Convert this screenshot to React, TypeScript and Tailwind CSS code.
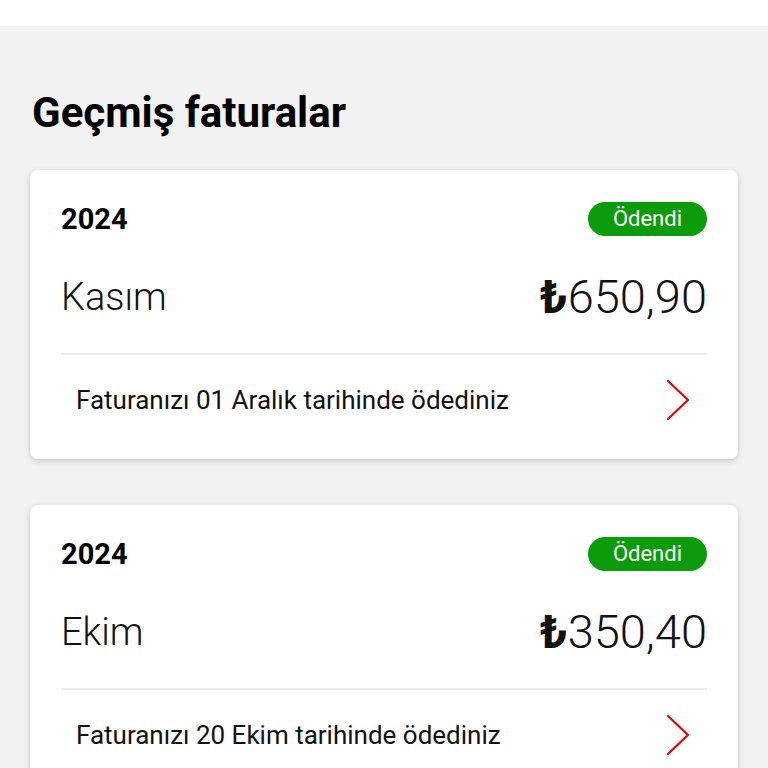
import React from "react";

const bills = [
  { year: "2024", month: "Kasım", amount: "650,90", note: "Faturanızı 01 Aralık tarihinde ödediniz" },
  { year: "2024", month: "Ekim", amount: "350,40", note: "Faturanızı 20 Ekim tarihinde ödediniz" },
];

function Chevron() {
  return (
    <svg width="26" height="44" viewBox="0 0 26 44" fill="none">
      <path d="M4 3 L24 22 L4 41" stroke="#e60000" strokeWidth="2.2" strokeLinecap="round" strokeLinejoin="round" />
    </svg>
  );
}

function BillCard({ year, month, amount, note }: (typeof bills)[number]) {
  return (
    <div className="rounded-lg bg-white px-[31px] shadow-[0_2px_6px_rgba(0,0,0,0.18)]">
      <div className="flex items-center justify-between pt-[32px]">
        <span className="text-[29px] font-bold leading-none text-black">{year}</span>
        <span className="rounded-full bg-[#0a9c0a] px-[25px] py-[3px] text-[22px] leading-[28px] text-white">
          Ödendi
        </span>
      </div>
      <div className="flex items-center justify-between pb-[33px] pt-[37px]">
        <span className="text-[38px] font-light leading-none text-[#111]">{month}</span>
        <span className="text-[47px] font-light leading-none text-[#111]">
          <span className="font-bold">₺</span>
          {amount}
        </span>
      </div>
      <div className="h-[2px] bg-[#ebebeb]" />
      <div className="flex items-center justify-between pb-[37px] pl-[15px] pr-[17px] pt-[23px]">
        <span className="text-[26px] leading-none text-[#111]">{note}</span>
        <Chevron />
      </div>
    </div>
  );
}

export default function App() {
  return (
    <div className="min-h-[768px] w-full bg-[#f2f2f2] font-['Roboto',sans-serif]">
      <div className="h-[26px] bg-white" />
      <div className="flex flex-col px-[30px]">
        <h1 className="pb-[37px] pl-[2px] pt-[67px] text-[42px] font-bold leading-[40px] text-black">
          Geçmiş faturalar
        </h1>
        <div className="flex flex-col gap-[46px]">
          {bills.map((b, i) => (
            <BillCard key={i} {...b} />
          ))}
        </div>
      </div>
    </div>
  );
}
